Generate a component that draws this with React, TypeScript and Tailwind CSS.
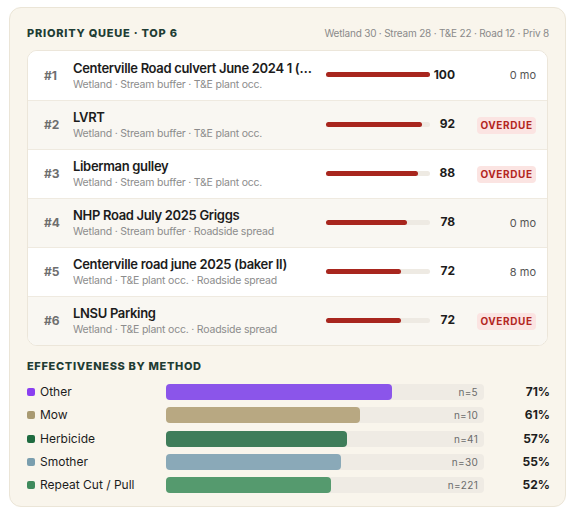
import React from 'react';

type QueueItem = {
  rank: number;
  name: string;
  tags: string;
  score: number;
  status: string;
};

const queue: QueueItem[] = [
  { rank: 1, name: 'Centerville Road culvert June 2024 1 (baker I)', tags: 'Wetland · Stream buffer · T&E plant occ.', score: 100, status: '0 mo' },
  { rank: 2, name: 'LVRT', tags: 'Wetland · Stream buffer · T&E plant occ.', score: 92, status: 'OVERDUE' },
  { rank: 3, name: 'Liberman gulley', tags: 'Wetland · Stream buffer · T&E plant occ.', score: 88, status: 'OVERDUE' },
  { rank: 4, name: 'NHP Road July 2025 Griggs', tags: 'Wetland · Stream buffer · Roadside spread', score: 78, status: '0 mo' },
  { rank: 5, name: 'Centerville road june 2025 (baker II)', tags: 'Wetland · T&E plant occ. · Roadside spread', score: 72, status: '8 mo' },
  { rank: 6, name: 'LNSU Parking', tags: 'Wetland · T&E plant occ. · Roadside spread', score: 72, status: 'OVERDUE' },
];

const methods = [
  { label: 'Other', n: 5, pct: 71, swatch: 'bg-[#8a3ff0]', bar: 'bg-[#8b55ea]' },
  { label: 'Mow', n: 10, pct: 61, swatch: 'bg-[#a99a72]', bar: 'bg-[#b8a882]' },
  { label: 'Herbicide', n: 41, pct: 57, swatch: 'bg-[#1f6b40]', bar: 'bg-[#3f7d5a]' },
  { label: 'Smother', n: 30, pct: 55, swatch: 'bg-[#7a9eae]', bar: 'bg-[#8aa9b8]' },
  { label: 'Repeat Cut / Pull', n: 221, pct: 52, swatch: 'bg-[#3f8a5c]', bar: 'bg-[#559a6e]' },
];

function QueueRow({ item, even }: { item: QueueItem; even: boolean }) {
  return (
    <div
      className={`grid h-[49px] grid-cols-[29px_1fr_104px_25px_81px] items-center pl-4 pr-[11px] ${
        even ? 'bg-[#f9f7f2]' : 'bg-white'
      } ${item.rank > 1 ? 'border-t border-[#efeae0]' : ''}`}
    >
      <span className="text-[12px] font-bold text-[#6e6e6e]">#{item.rank}</span>
      <div className="min-w-0 pr-[10px]">
        <p className="truncate text-[13px] leading-[17px] font-semibold tracking-[-0.025em] text-[#1c1c1c]">
          {item.name}
        </p>
        <p className="truncate text-[10.5px] leading-[15px] tracking-[-0.02em] text-[#8c8c8c]">{item.tags}</p>
      </div>
      {/* score bar */}
      <div className="-mt-[2px] h-[5px] w-full rounded-full bg-[#eeeae3]">
        <div className="h-full rounded-full bg-[#a8261e]" style={{ width: `${item.score}%` }} />
      </div>
      <span className="-mt-[2px] text-right text-[12px] font-bold text-[#1c1c1c]">{item.score}</span>
      <div className="flex justify-end">
        {item.status === 'OVERDUE' ? (
          <span className="flex h-[17px] w-[59px] items-center justify-center rounded-[4px] bg-[#fbe4e2] text-[10px] font-bold tracking-[0.06em] text-[#b3261e]">
            OVERDUE
          </span>
        ) : (
          <span className="text-[11px] text-[#555]">{item.status}</span>
        )}
      </div>
    </div>
  );
}

export default function App() {
  return (
    <div className="min-h-[516px] bg-white pt-[7px] pl-[9px] font-['Inter','Liberation_Sans',sans-serif]">
      <div className="w-[557px] rounded-[12px] border border-[#ebe5d7] bg-[#f9f5ec] pt-[17px] pr-[17px] pb-[14px] pl-[17px]">
        {/* Priority queue */}
        <div className="flex h-[16px] items-center justify-between">
          <h2 className="text-[11px] font-extrabold tracking-[0.07em] text-[#1f3d34]">PRIORITY QUEUE · TOP 6</h2>
          <span className="-mr-px text-[10px] tracking-[-0.02em] text-[#8a8a8a]">
            Wetland 30 · Stream 28 · T&amp;E 22 · Road 12 · Priv 8
          </span>
        </div>

        <div className="mt-[9px] overflow-hidden rounded-[10px] border border-[#ece6da] bg-white">
          {queue.map((item, i) => (
            <QueueRow key={item.rank} item={item} even={i % 2 === 1} />
          ))}
        </div>

        {/* Effectiveness */}
        <h2 className="mt-[13px] h-[14px] text-[11px] leading-[14px] font-extrabold tracking-[0.06em] text-[#1f3d34]">
          EFFECTIVENESS BY METHOD
        </h2>

        <div className="mt-[10px] flex flex-col gap-[7.3px]">
          {methods.map((m) => (
            <div key={m.label} className="grid h-[16px] grid-cols-[139px_318px_1fr] items-center">
              <div className="flex items-center gap-[5px]">
                <span className={`h-[8px] w-[8px] rounded-[2px] ${m.swatch}`} />
                <span className="text-[12px] text-[#1c1c1c]">{m.label}</span>
              </div>
              <div className="relative h-[16px] rounded-[4px] bg-[#efebe4]">
                <div className={`h-full rounded-[4px] ${m.bar}`} style={{ width: `${m.pct}%` }} />
                <span className="absolute top-0 right-[6px] text-[10px] leading-[16px] tracking-[0.03em] text-[#6b6b6b]">
                  n={m.n}
                </span>
              </div>
              <span className="-mr-[2px] text-right text-[12px] font-bold text-[#1c1c1c]">{m.pct}%</span>
            </div>
          ))}
        </div>
      </div>
    </div>
  );
}
